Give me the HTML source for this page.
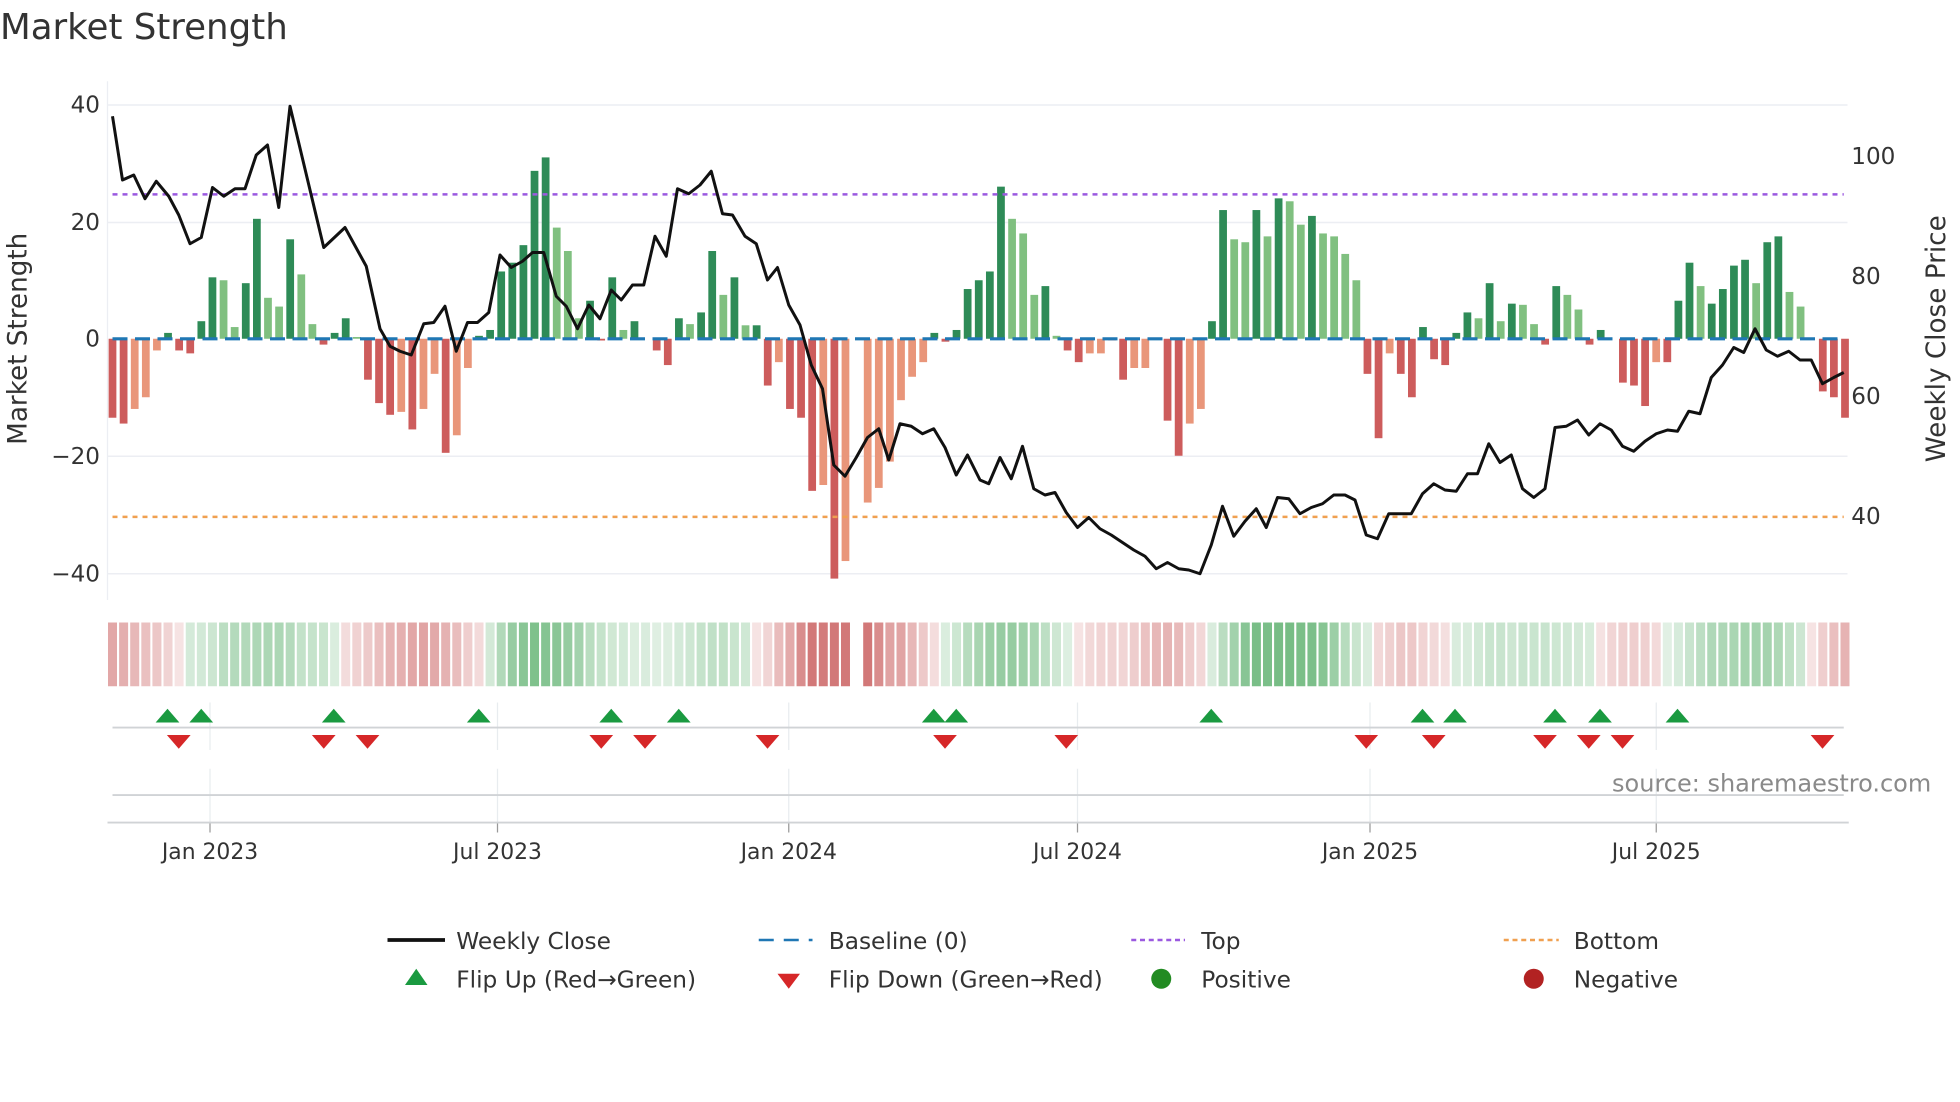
<!DOCTYPE html>
<html><head><meta charset="utf-8"><style>
html,body{margin:0;padding:0;background:#fff;width:1960px;height:1102px;overflow:hidden}
svg{display:block}
text{font-family:"DejaVu Sans","Liberation Sans",sans-serif;fill:#333}
</style></head><body>
<svg id="s" width="1960" height="1102" viewBox="0 0 1568 881.6" preserveAspectRatio="none" xmlns="http://www.w3.org/2000/svg">
<text x="0" y="31" font-size="28.5" fill="#333">Market Strength</text>
<g id="grid"></g>
<g id="bars"></g>
<g id="strip"></g>
<g id="mk"></g>
<text x="0" y="0" font-size="21" transform="translate(21,271) rotate(-90)" text-anchor="middle">Market Strength</text>
<text x="0" y="0" font-size="21" transform="translate(1556,271) rotate(-90)" text-anchor="middle">Weekly Close Price</text>
<g font-size="18.5" text-anchor="end">
<text x="80" y="90">40</text><text x="80" y="184">20</text><text x="80" y="277">0</text><text x="80" y="371">−20</text><text x="80" y="465">−40</text>
</g>
<g font-size="18.5">
<text x="1481" y="131">100</text><text x="1481" y="227">80</text><text x="1481" y="323">60</text><text x="1481" y="419">40</text>
</g>
<g font-size="17.5" text-anchor="middle">
<text x="168" y="687">Jan 2023</text><text x="398" y="687">Jul 2023</text><text x="631" y="687">Jan 2024</text><text x="862" y="687">Jul 2024</text><text x="1096" y="687">Jan 2025</text><text x="1325" y="687">Jul 2025</text>
</g>
<text x="1545" y="633" font-size="19.2" text-anchor="end" style="fill:#8a8a8a">source: sharemaestro.com</text>
<g font-size="18.6">
<line x1="310" y1="752" x2="356" y2="752" stroke="#111" stroke-width="3"/><text x="365" y="759">Weekly Close</text>
<line x1="607" y1="752" x2="650" y2="752" stroke="#1f77b4" stroke-width="2" stroke-dasharray="12,8"/><text x="663" y="759">Baseline (0)</text>
<line x1="905" y1="752" x2="948" y2="752" stroke="#9b59e0" stroke-width="2" stroke-dasharray="4,3"/><text x="961" y="759">Top</text>
<line x1="1203" y1="752" x2="1247" y2="752" stroke="#f0a050" stroke-width="2" stroke-dasharray="4,3"/><text x="1259" y="759">Bottom</text>
<polygon points="324,788 333,775 342,788" fill="#1a9a40"/><text x="365" y="790">Flip Up (Red→Green)</text>
<polygon points="622,779 640,779 631,791" fill="#d62728"/><text x="663" y="790">Flip Down (Green→Red)</text>
<circle cx="929" cy="783" r="8" fill="#228b22"/><text x="961" y="790">Positive</text>
<circle cx="1227" cy="783" r="8" fill="#b22222"/><text x="1259" y="790">Negative</text>
</g>
</svg>
<script>
var NS="http://www.w3.org/2000/svg";
function el(p,t,a){var e=document.createElementNS(NS,t);for(var k in a)e.setAttribute(k,a[k]);document.getElementById(p).appendChild(e);return e;}
[84,178,365,459].forEach(function(y){el("grid","line",{x1:86,x2:1478,y1:y,y2:y,stroke:"#eceef3","stroke-width":1.2});});
el("grid","line",{x1:86,x2:86,y1:65,y2:480,stroke:"#eceef3","stroke-width":1});
[168,398,631,862,1096,1325].forEach(function(x){
 el("grid","line",{x1:x,x2:x,y1:562,y2:600,stroke:"#e8ecef","stroke-width":1});
 el("grid","line",{x1:x,x2:x,y1:615,y2:658,stroke:"#e8ecef","stroke-width":1});
 el("grid","line",{x1:x,x2:x,y1:658,y2:666,stroke:"#999","stroke-width":1});
});
el("grid","line",{x1:90,x2:1475,y1:582,y2:582,stroke:"#d0d3d6","stroke-width":1.5});
el("grid","line",{x1:90,x2:1475,y1:636,y2:636,stroke:"#d0d3d6","stroke-width":1.5});
el("grid","line",{x1:86,x2:1479,y1:658,y2:658,stroke:"#d0d3d6","stroke-width":1.5});
var B="-13.5D -14.5D -12L -10L -2L 1D -2D -2.5D 3D 10.5D 10L 2L 9.5D 20.5D 7L 5.5L 17D 11L 2.5L -1D 1D 3.5D 0.3L -7D -11D -13D -12.5L -15.5D -12L -6L -19.5D -16.5L -5L 0.5D 1.5D 11.5D 13D 16D 28.7D 31D 19L 15L 3.5L 6.5D -0.3D 10.5D 1.5L 3D 0D -2D -4.5D 3.5D 2.5L 4.5D 15D 7.5L 10.5D 2.3L 2.3D -8D -4L -12D -13.5D -26D -25L -41D -38L 0D -28L -25.5L -21L -10.5L -6.5L -4L 1D -0.5D 1.5D 8.5D 10D 11.5D 26D 20.5L 18L 7.5L 9D 0.5L -2D -4D -2.5L -2.5L -0.3L -7D -5L -5L 0D -14D -20D -14.5L -12L 3D 22D 17L 16.5L 22D 17.5L 24D 23.5L 19.5L 21D 18L 17.5L 14.5L 10L -6D -17D -2.5L -6D -10D 2D -3.5D -4.5D 1D 4.5D 3.5L 9.5D 3L 6D 5.8L 2.5L -1D 9D 7.5L 5L -1D 1.5D 0D -7.5D -8D -11.5D -4L -4D 6.5D 13D 9L 6D 8.5D 12.5D 13.5D 9.5L 16.5D 17.5D 8L 5.5L 0D -9D -10D -13.5D".split(" ");
var n=B.length,x0=90,x1=1476,st=(x1-x0)/(n-1),Z=271,K=4.68;
var vals=B.map(function(s){return parseFloat(s);});
B.forEach(function(s,i){
 var v=vals[i],t=s.slice(-1),x=x0+i*st,h=Math.abs(v)*K;
 var c=v>=0?(t=="D"?"#2e8b57":"#80c080"):(t=="D"?"#cd5c5c":"#e9967a");
 if(h>0.2)el("bars","rect",{x:x-3.1,y:v>=0?Z-h:Z,width:6.2,height:h,fill:c});
 var a=0;for(var j=-3;j<=3;j++){var k=Math.min(n-1,Math.max(0,i+j));a+=vals[k];}a/=7;
 if(i==67)return;
 var al=Math.min(0.75,0.15+Math.abs(a)/38);
 var sc=a>=0?"rgba(60,160,80,"+al+")":"rgba(195,75,75,"+al+")";
 el("strip","rect",{x:x-3.6,y:498,width:7.2,height:51,fill:sc});
});
el("bars","line",{x1:90,x2:1475,y1:271,y2:271,stroke:"#1f77b4","stroke-width":2.5,"stroke-dasharray":"12,6"});
el("bars","line",{x1:90,x2:1475,y1:155.5,y2:155.5,stroke:"#9b59e0","stroke-width":2,"stroke-dasharray":"4,4"});
el("bars","line",{x1:90,x2:1475,y1:413.5,y2:413.5,stroke:"#f0a050","stroke-width":2,"stroke-dasharray":"4,4"});
var P="90,93 98,144 107,140 116,159 125,145 135,157 143,172 152,195 161,190 170,150 179,157 188,151 196,151 205,124 214,116 223,166 232,85 259,198 276,182 293,213 304,263 312,277 320,281 329,284 339,259 347,258 356,245 365,281 374,258 382,258 391,250 400,204 409,214 418,209 426,202 435,202 445,237 453,245 462,263 471,244 480,255 489,232 497,240 506,228 515,228 524,189 533,205 542,151 551,155 560,148 569,137 578,171 586,172 596,189 605,195 614,224 622,214 631,244 640,260 649,292 658,311 667,372 676,381 685,366 694,350 703,343 711,368 720,339 729,341 738,347 747,343 756,358 765,380 774,364 784,384 791,387 800,366 809,383 818,357 827,391 836,396 844,394 853,410 862,422 871,414 880,423 889,428 898,434 907,440 916,445 925,455 934,450 943,455 951,456 960,459 969,436 978,405 987,429 996,417 1005,407 1013,422 1022,398 1031,399 1040,411 1049,406 1058,403 1067,396 1076,396 1084,400 1093,428 1102,431 1111,411 1120,411 1129,411 1138,395 1147,387 1156,392 1165,393 1174,379 1182,379 1191,355 1200,370 1209,364 1218,391 1227,398 1236,391 1244,342 1253,341 1262,336 1271,348 1280,339 1289,344 1298,357 1307,361 1316,353 1325,347 1334,344 1342,345 1351,329 1360,331 1369,302 1378,292 1387,278 1395,282 1404,263 1413,280 1422,285 1431,281 1440,288 1449,288 1458,307 1467,302 1475,298";
el("bars","polyline",{points:P,fill:"none",stroke:"#111","stroke-width":2.4,"stroke-linejoin":"round"});
[134,161,267,383,489,543,747,765,969,1138,1164,1244,1280,1342].forEach(function(x){el("mk","polygon",{points:(x-9.5)+",578 "+x+",567 "+(x+9.5)+",578",fill:"#1a9a40"});});
[143,259,294,481,516,614,756,853,1093,1147,1236,1271,1298,1458].forEach(function(x){el("mk","polygon",{points:(x-9.5)+",588 "+(x+9.5)+",588 "+x+",599",fill:"#d62728"});});
</script>
</body></html>
